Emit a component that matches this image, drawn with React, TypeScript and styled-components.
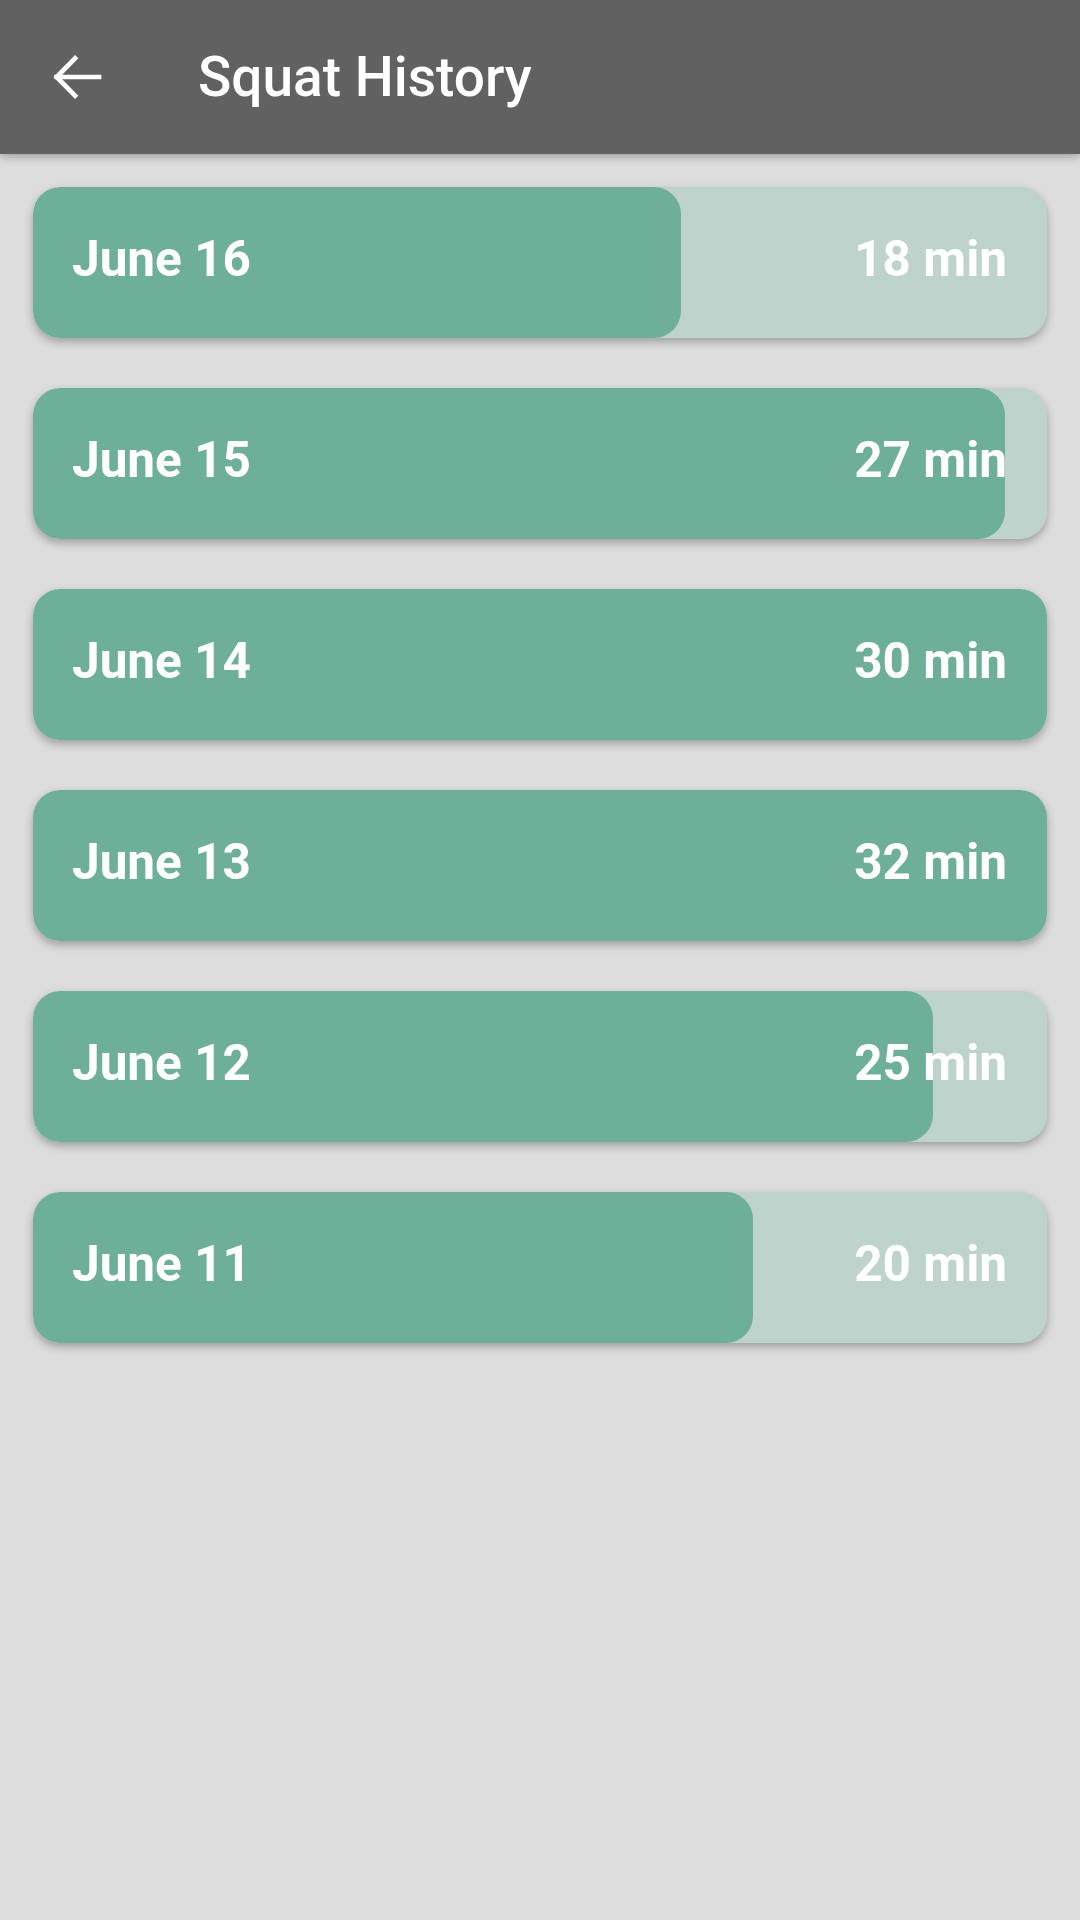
import React from 'react';
import styled, {createGlobalStyle} from 'styled-components';

const GlobalStyle = createGlobalStyle`
  html, body {
    margin: 0;
    padding: 0;
    background: #dddddd;
    font-family: Roboto, "Noto Sans", "Liberation Sans", sans-serif;
  }
`;

const Screen = styled.div`
  width: 1080px;
  min-height: 1920px;
  background: #dddddd;
  display: flex;
  flex-direction: column;
`;

const Toolbar = styled.header`
  height: 154px;
  background: #616161;
  display: flex;
  align-items: center;
  box-shadow: 0 3px 8px rgba(0, 0, 0, 0.28);
  position: relative;
  z-index: 1;
`;

const BackButton = styled.button`
  width: 66px;
  height: 66px;
  margin-left: 44px;
  padding: 0;
  border: none;
  background: transparent;
  display: flex;
  align-items: center;
  justify-content: center;
`;

const Title = styled.h1`
  margin: 0 0 0 88px;
  color: #ffffff;
  font-size: 55px;
  font-weight: 500;
  letter-spacing: 0;
`;

const List = styled.main`
  display: flex;
  flex-direction: column;
  gap: 50px;
  padding: 33px;
`;

const Card = styled.div`
  position: relative;
  height: 151px;
  border-radius: 27px;
  background: #bed3cb;
  box-shadow: 0 4px 9px rgba(0, 0, 0, 0.28);
  overflow: hidden;
`;

const Fill = styled.div`
  position: absolute;
  top: 0;
  left: 0;
  bottom: 0;
  border-radius: 27px;
  background: #6daf99;
`;

const Row = styled.div`
  position: relative;
  height: 100%;
  display: flex;
  align-items: center;
  justify-content: space-between;
  padding: 0 40px 7px 39px;
  box-sizing: border-box;
  color: #ffffff;
  font-size: 49.5px;
  font-weight: 700;
`;

const sessions = [
  {day: 'June 16', minutes: 18},
  {day: 'June 15', minutes: 27},
  {day: 'June 14', minutes: 30},
  {day: 'June 13', minutes: 32},
  {day: 'June 12', minutes: 25},
  {day: 'June 11', minutes: 20},
];

const ArrowBack = () => (
  <svg width="66" height="66" viewBox="0 0 24 24" fill="none">
    <path
      d="M20 12H4.6M11.3 5.2L4.6 12l6.7 6.8"
      stroke="#ffffff"
      strokeWidth="1.7"
      strokeLinecap="square"
    />
  </svg>
);

export default function App() {
  return (
    <Screen>
      <GlobalStyle />
      <Toolbar>
        <BackButton aria-label="Back">
          <ArrowBack />
        </BackButton>
        <Title>Squat History</Title>
      </Toolbar>
      <List>
        {sessions.map((s) => (
          <Card key={s.day}>
            <Fill style={{width: `${Math.min(100, (s.minutes * 36 * 100) / 1014)}%`}} />
            <Row>
              <span>{s.day}</span>
              <span>{s.minutes} min</span>
            </Row>
          </Card>
        ))}
      </List>
    </Screen>
  );
}
